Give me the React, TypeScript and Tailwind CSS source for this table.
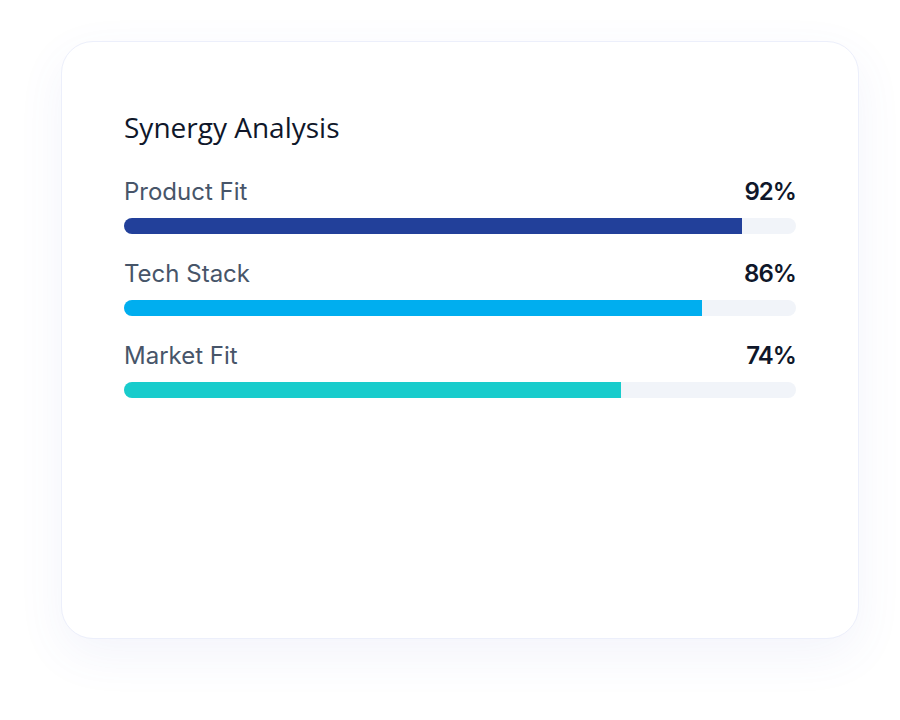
import React from "react";

const rows = [
  { label: "Product Fit", value: 92, color: "bg-[#22409a]" },
  { label: "Tech Stack", value: 86, color: "bg-[#00aeef]" },
  { label: "Market Fit", value: 74, color: "bg-[#18cccc]" },
];

export default function App() {
  return (
    <div className="w-[900px] h-[720px] bg-white overflow-hidden pt-[41px] pl-[61px]">
      <div className="w-[798px] h-[598px] rounded-[32px] border border-[#eceffb] bg-white shadow-[0_16px_48px_rgba(90,100,200,0.07)] px-[62px] pt-[67px]">
        <h2 className="text-[28px] leading-[36px] text-[#0f172a] font-normal" style={{ fontFamily: '"Open Sans", sans-serif' }}>
          Synergy Analysis
        </h2>
        <div className="mt-[31px] flex flex-col gap-6" style={{ fontFamily: 'Inter, sans-serif' }}>
          {rows.map((r) => (
            <div key={r.label} className="flex flex-col">
              <div className="flex items-baseline justify-between h-8 leading-8">
                <span className="text-2xl text-[#475569]">{r.label}</span>
                <span className="text-2xl font-semibold tracking-[-0.04em] text-[#0f172a]">{r.value}%</span>
              </div>
              <div className="mt-[10px] h-4 w-full rounded-full bg-[#f1f4f9] overflow-hidden">
                <div className={`h-full ${r.color}`} style={{ width: `${r.value}%` }} />
              </div>
            </div>
          ))}
        </div>
      </div>
    </div>
  );
}
